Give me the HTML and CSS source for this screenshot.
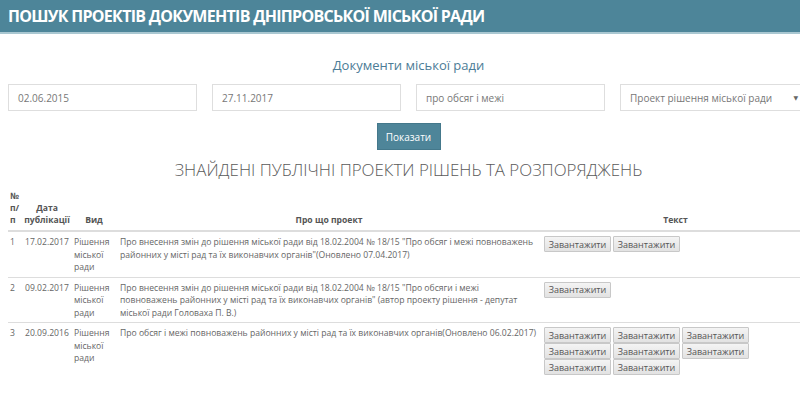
FILE: index.html
```html
<!DOCTYPE html>
<html lang="uk">
<head>
<meta charset="utf-8">
<title>Пошук проектів документів</title>
<link rel="stylesheet" href="styles.css">
</head>
<body>
<header class="topbar">
  <h1 class="topbar-title">ПОШУК ПРОЕКТІВ ДОКУМЕНТІВ ДНІПРОВСЬКОЇ МІСЬКОЇ РАДИ</h1>
</header>
<main class="page">
  <h2 class="subtitle">Документи міської ради</h2>
  <div class="filters">
    <div class="field">02.06.2015</div>
    <div class="field">27.11.2017</div>
    <div class="field">про обсяг і межі</div>
    <div class="field field-select"><span>Проект рішення міської ради</span><span class="arrow">▼</span></div>
  </div>
  <div class="actions"><button class="btn-primary">Показати</button></div>
  <h3 class="results-title">ЗНАЙДЕНІ ПУБЛІЧНІ ПРОЕКТИ РІШЕНЬ ТА РОЗПОРЯДЖЕНЬ</h3>
  <table class="results">
    <colgroup>
      <col class="c-num"><col class="c-date"><col class="c-kind"><col class="c-about"><col class="c-text">
    </colgroup>
    <thead>
      <tr>
        <th>№<br>п/<br>п</th>
        <th>Дата публікації</th>
        <th>Вид</th>
        <th>Про що проект</th>
        <th>Текст</th>
      </tr>
    </thead>
    <tbody>
      <tr>
        <td>1</td>
        <td class="t-date">17.02.2017</td>
        <td>Рішення міської ради</td>
        <td class="t-about">Про внесення змін до рішення міської ради від 18.02.2004 № 18/15 "Про обсяг і межі повноважень районних у місті рад та їх виконавчих органів"(Оновлено 07.04.2017)</td>
        <td><div class="files"><button class="btn">Завантажити</button><button class="btn">Завантажити</button></div></td>
      </tr>
      <tr>
        <td>2</td>
        <td class="t-date">09.02.2017</td>
        <td>Рішення міської ради</td>
        <td class="t-about">Про внесення змін до рішення міської ради від 18.02.2004 № 18/15 "Про обсяги і межі повноважень районних у місті рад та їх виконавчих органів" (автор проекту рішення - депутат міської ради Головаха П. В.)</td>
        <td><div class="files"><button class="btn">Завантажити</button></div></td>
      </tr>
      <tr>
        <td>3</td>
        <td class="t-date">20.09.2016</td>
        <td>Рішення міської ради</td>
        <td class="t-about">Про обсяг і межі повноважень районних у місті рад та їх виконавчих органів(Оновлено 06.02.2017)</td>
        <td><div class="files"><button class="btn">Завантажити</button><button class="btn">Завантажити</button><button class="btn">Завантажити</button><button class="btn">Завантажити</button><button class="btn">Завантажити</button><button class="btn">Завантажити</button><button class="btn">Завантажити</button><button class="btn">Завантажити</button></div></td>
      </tr>
    </tbody>
  </table>
</main>
</body>
</html>
```
FILE: styles.css
```css
html, body {
  margin: 0;
  padding: 0;
  background: #ffffff;
  overflow: hidden;
}
body {
  font-family: "Open Sans", "DejaVu Sans", sans-serif;
  color: #666;
  width: 800px;
  height: 404px;
}
.topbar {
  height: 32px;
  background: #4d8599;
  border-bottom: 2px solid #a9c7d1;
  padding-left: 8px;
  display: flex;
  align-items: center;
}
.topbar-title {
  margin: 0;
  font-size: 16px;
  font-weight: 700;
  color: #ffffff;
  letter-spacing: -0.7px;
  white-space: nowrap;
}
.page {
  width: 801px;
  margin-left: 8px;
}
.subtitle {
  margin: 22px 0 0;
  text-align: center;
  font-size: 13px;
  font-weight: 400;
  color: #4c7c96;
  line-height: 18px;
}
.filters {
  display: flex;
  gap: 15px;
  margin-top: 10px;
}
.field {
  width: 189px;
  height: 27px;
  box-sizing: border-box;
  border: 1px solid #dedede;
  padding-left: 9px;
  font-size: 10px;
  color: #777;
  display: flex;
  align-items: center;
}
.field-select {
  justify-content: space-between;
  padding-right: 10px;
}
.arrow {
  font-size: 6px;
  color: #666;
}
.actions {
  display: flex;
  justify-content: center;
  margin-top: 12px;
}
.btn-primary {
  width: 64px;
  height: 27px;
  background: #4e8599;
  border: 1px solid #44788b;
  color: #ffffff;
  font-family: "Open Sans", "DejaVu Sans", sans-serif;
  font-size: 10px;
  padding: 0;
}
.results-title {
  margin: 8px 0 0;
  text-align: center;
  font-size: 16.9px;
  font-weight: 300;
  color: #5a5a5a;
  line-height: 24px;
}
.results {
  width: 801px;
  border-collapse: collapse;
  margin-top: 8px;
  table-layout: fixed;
  font-size: 8.6px;
}
.c-num { width: 14px; }
.c-date { width: 50px; }
.c-kind { width: 44px; }
.c-about { width: 426px; }
.c-text { width: 267px; }
.results th {
  font-weight: 700;
  color: #555;
  text-align: center;
  vertical-align: bottom;
  line-height: 12px;
  padding: 0 2px 4px;
  border-bottom: 2px solid #dddddd;
}
.results th:first-child { text-align: left; }
.results td {
  vertical-align: top;
  line-height: 12.5px;
  padding: 4px 2px 3px;
  border-bottom: 1px solid #dddddd;
  color: #666;
}
.results tbody tr:last-child td { border-bottom: none; }
.results td.t-date { padding-left: 3px; }
.results td.t-about { padding-left: 4px; padding-right: 4px; }
.files {
  display: flex;
  flex-wrap: wrap;
  gap: 0 2px;
  width: 210px;
  margin-top: 0;
}
.btn {
  width: 67px;
  height: 16px;
  padding: 0;
  font-family: "Open Sans", "DejaVu Sans", sans-serif;
  font-size: 9px;
  color: #555;
  background: linear-gradient(#f4f4f4, #e2e2e2);
  border: 1px solid #c8c8c8;
  border-radius: 1px;
}
```
